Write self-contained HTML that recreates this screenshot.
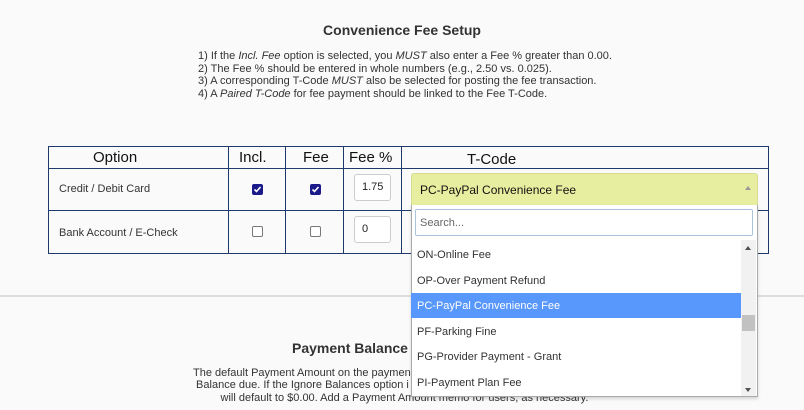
<!DOCTYPE html>
<html><head><meta charset="utf-8"><style>
*{box-sizing:border-box;margin:0;padding:0}
body{width:804px;height:410px;overflow:hidden;background:#fafafa;font-family:"Liberation Sans",Arial,sans-serif;color:#333;position:relative}
.a{position:absolute;white-space:nowrap}
.t{font-weight:bold;font-size:14px;color:#333}
.ins{left:198px;font-size:11px;color:#333;line-height:12.6px}
.vl{position:absolute;width:1px;background:#1c3a6b;top:146px;height:107px}
.hl{position:absolute;height:1px;background:#1c3a6b;left:48px;width:721px}
.h{font-size:15px;color:#111;top:149px}
.c{font-size:11px;color:#333}
.cb{position:absolute;width:11px;height:11px;border-radius:2px}
.on{background:#1a1a8a;border:1px solid #1a1a8a}
.off{background:#fff;border:1px solid #777}
.inp{position:absolute;left:354px;width:37px;height:27px;border:1px solid #ccc;border-radius:3px;background:#fff;font-size:11px;color:#222;padding:6px 0 0 7px}
.it{position:absolute;left:411px;width:330px;height:25px;font-size:11px;color:#333;padding:7px 0 0 6px}
</style></head><body>
<div class="a t" style="left:0;width:804px;text-align:center;top:22px">Convenience Fee Setup</div>
<div class="a ins" style="top:50px">1) If the <i>Incl. Fee</i> option is selected, you <i>MUST</i> also enter a Fee % greater than 0.00.<br>2) The Fee % should be entered in whole numbers (e.g., 2.50 vs. 0.025).<br>3) A corresponding T-Code <i>MUST</i> also be selected for posting the fee transaction.<br>4) A <i>Paired T-Code</i> for fee payment should be linked to the Fee T-Code.</div>

<div class="hl" style="top:146px"></div><div class="hl" style="top:168px"></div><div class="hl" style="top:210px"></div><div class="hl" style="top:253px"></div>
<div class="vl" style="left:48px"></div><div class="vl" style="left:228px"></div><div class="vl" style="left:285px"></div><div class="vl" style="left:343px"></div><div class="vl" style="left:401px"></div><div class="vl" style="left:768px"></div>
<div class="a h" style="left:93px">Option</div>
<div class="a h" style="left:239px">Incl.</div>
<div class="a h" style="left:303px">Fee</div>
<div class="a h" style="left:349px">Fee %</div>
<div class="a h" style="left:467px;top:151px">T-Code</div>
<div class="a c" style="left:59px;top:183px">Credit / Debit Card</div>
<div class="a c" style="left:59px;top:227px">Bank Account / E-Check</div>
<div class="cb on" style="left:252px;top:184px"><svg width="9" height="9" style="position:absolute;left:0;top:0"><path d="M1.5 4.5L3.5 6.5L7.5 2" stroke="#fff" stroke-width="1.6" fill="none"/></svg></div>
<div class="cb on" style="left:310px;top:184px"><svg width="9" height="9" style="position:absolute;left:0;top:0"><path d="M1.5 4.5L3.5 6.5L7.5 2" stroke="#fff" stroke-width="1.6" fill="none"/></svg></div>
<div class="cb off" style="left:252px;top:226px"></div>
<div class="cb off" style="left:310px;top:226px"></div>
<div class="inp" style="top:174px">1.75</div>
<div class="inp" style="top:216px">0</div>

<div class="a" style="left:0;top:295px;width:804px;height:2px;background:#ddd"></div>
<div class="a t" style="left:292px;top:340px">Payment Balance</div>
<div class="a" style="left:193px;top:367px;font-size:11px;line-height:12.3px;color:#333">The default Payment Amount on the paymen<br>&nbsp;Balance due. If the Ignore Balances option i<br>&nbsp;&nbsp;&nbsp;&nbsp;&nbsp;&nbsp;&nbsp;&nbsp;&nbsp;will default to $0.00. Add a Payment Amount memo for users, as necessary.</div>

<div class="a" style="left:411px;top:173px;width:347px;height:33px;background:#e8ee9f;border:1px solid #d6dc90;border-radius:3px 3px 0 0"></div>
<div class="a" style="left:420px;top:183px;font-size:12px;color:#111">PC-PayPal Convenience Fee</div>
<div class="a" style="left:745px;top:186px;width:0;height:0;border-left:3px solid transparent;border-right:3px solid transparent;border-bottom:4px solid #999"></div>
<div class="a" style="left:411px;top:205px;width:347px;height:192px;background:#fff;border:1px solid #aaa;border-top:none;box-shadow:0 2px 3px rgba(0,0,0,.15)"></div>
<div class="a" style="left:415px;top:209px;width:338px;height:27px;border:1px solid #aac4dd;border-radius:2px;background:#fff;font-size:11px;color:#666;padding:7px 0 0 4px">Search...</div>
<div class="it" style="top:242px">ON-Online Fee</div>
<div class="it" style="top:268px">OP-Over Payment Refund</div>
<div class="it" style="top:293px;background:#5897fb;color:#fff">PC-PayPal Convenience Fee</div>
<div class="it" style="top:319px">PF-Parking Fine</div>
<div class="it" style="top:344px">PG-Provider Payment - Grant</div>
<div class="it" style="top:370px">PI-Payment Plan Fee</div>
<div class="a" style="left:741px;top:240px;width:15px;height:156px;background:#f1f1f1"></div>
<div class="a" style="left:742px;top:315px;width:13px;height:16px;background:#c1c1c1"></div>
<div class="a" style="left:745px;top:246px;width:0;height:0;border-left:3.5px solid transparent;border-right:3.5px solid transparent;border-bottom:4px solid #505050"></div>
<div class="a" style="left:745px;top:388px;width:0;height:0;border-left:3.5px solid transparent;border-right:3.5px solid transparent;border-top:4px solid #505050"></div>
</body></html>
